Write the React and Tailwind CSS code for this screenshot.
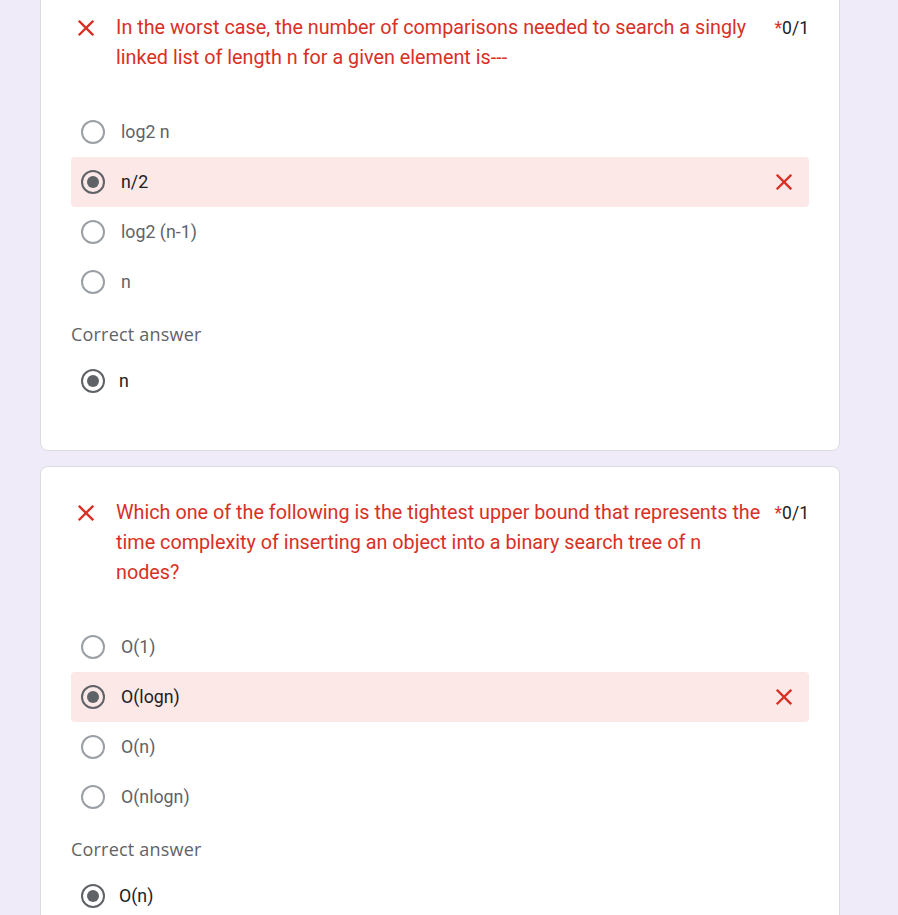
const XIcon = ({ className = '' }) => (
  <svg viewBox="0 0 24 24" className={className} fill="none" stroke="#d93025" strokeWidth="2.6" strokeLinecap="square">
    <path d="M5 5 L19 19 M19 5 L5 19" />
  </svg>
);

const Radio = ({ checked }) => (
  <span
    className={`flex h-6 w-6 shrink-0 items-center justify-center rounded-full border-[2.5px] ${
      checked ? 'border-[#5f6368]' : 'border-[#9aa0a6]'
    }`}
  >
    {checked && <span className="h-3 w-3 rounded-full bg-[#5f6368]" />}
  </span>
);

const Option = ({ label, selected }) => (
  <div
    className={`flex h-[50px] items-center rounded-[4px] pl-[10px] pr-[14px] ${selected ? 'bg-[#fce8e6]' : ''}`}
  >
    <Radio checked={selected} />
    <span className={`ml-[16px] text-[17.8px] ${selected ? 'text-[#202124]' : 'text-[#5f6368]'}`}>{label}</span>
    {selected && <XIcon className="ml-auto h-[22px] w-[22px]" />}
  </div>
);

const QuestionCard = ({ question, options, selected, correct, className = '' }) => (
  <div className={`rounded-lg border border-[#dadce0] bg-white px-[30px] pt-[31px] pb-[44px] ${className}`}>
    <div className="flex items-start">
      <XIcon className="mt-[4px] ml-[4px] h-[22px] w-[22px] shrink-0" />
      <div className="ml-[19px] flex-1 text-[19.8px] leading-[30px] text-[#d93025]">{question}</div>
      <div className="ml-[8px] shrink-0 text-[17.5px] leading-[30px] text-[#202124]">
        <span className="text-[#d93025]">*</span>0/1
      </div>
    </div>
    <div className="mt-[34px] flex flex-col">
      {options.map((o) => (
        <Option key={o} label={o} selected={o === selected} />
      ))}
    </div>
    <div
      className="mt-[15px] text-[18px] leading-[24px] font-medium tracking-[0.2px] text-[#5f6368]"
      style={{ fontFamily: '"Open Sans", Roboto, sans-serif' }}
    >
      Correct answer
    </div>
    <div className="mt-[10px] flex h-[50px] items-center pl-[10px]">
      <Radio checked />
      <span className="ml-[14px] text-[17.8px] text-[#202124]">{correct}</span>
    </div>
  </div>
);

export default function App() {
  return (
    <div className="min-h-screen overflow-hidden bg-[#f0ebf8] pr-[58px] pl-[40px]" style={{ fontFamily: 'Roboto, "Liberation Sans", sans-serif' }}>
      <QuestionCard
        className="-mt-[19px]"
        question="In the worst case, the number of comparisons needed to search a singly linked list of length n for a given element is---"
        options={['log2 n', 'n/2', 'log2 (n-1)', 'n']}
        selected="n/2"
        correct="n"
      />
      <QuestionCard
        className="mt-[15px]"
        question="Which one of the following is the tightest upper bound that represents the time complexity of inserting an object into a binary search tree of n nodes?"
        options={['O(1)', 'O(logn)', 'O(n)', 'O(nlogn)']}
        selected="O(logn)"
        correct="O(n)"
      />
    </div>
  );
}
